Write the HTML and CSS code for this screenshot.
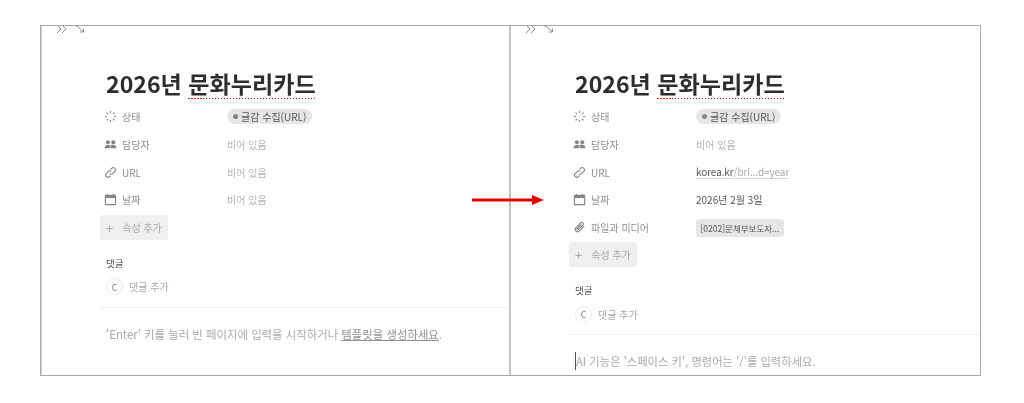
FILE: index.html
```html
<!DOCTYPE html>
<html lang="ko">
<head>
<meta charset="utf-8">
<title>문화누리카드</title>
<link rel="stylesheet" href="styles.css">
</head>
<body>
<svg class="defs" width="0" height="0" aria-hidden="true">
  <symbol id="i-side" viewBox="0 0 12 10"><path d="M1 1l4 4-4 4M6 1l4 4-4 4" fill="none" stroke="currentColor" stroke-width="1"/></symbol>
  <symbol id="i-exp" viewBox="0 0 12 10"><path d="M1 1h2.500M1 1v2M1 1l7 6.500M8.500 4.500V8H5" fill="none" stroke="currentColor" stroke-width="1"/></symbol>
  <symbol id="i-status" viewBox="0 0 14 14"><path d="M7 1v2.200M7 10.800V13M1 7h2.200M10.800 7H13M2.800 2.800l1.500 1.500M9.700 9.700l1.500 1.500M11.200 2.800 9.700 4.300M4.300 9.700l-1.500 1.500" fill="none" stroke="currentColor" stroke-width="1.200"/></symbol>
  <symbol id="i-people" viewBox="0 0 14 14"><circle cx="4.200" cy="4.600" r="2.200" fill="currentColor"/><circle cx="10" cy="4.600" r="2.200" fill="currentColor"/><path d="M.6 11c0-2.400 1.600-3.700 3.600-3.700S7 8.600 7 11zM7.600 11c0-1.600-.3-2.600-1-3.300.9-.4 2.100-.5 3.400-.4 2 .2 3.400 1.300 3.400 3.700z" fill="currentColor"/></symbol>
  <symbol id="i-link" viewBox="0 0 14 14"><path d="M6 8.200a2.300 2.300 0 0 0 3.300 0l2.300-2.300a2.400 2.400 0 0 0-3.400-3.400L7 3.700M8 5.800a2.300 2.300 0 0 0-3.300 0L2.400 8.100a2.400 2.400 0 0 0 3.400 3.400L7 10.300" fill="none" stroke="currentColor" stroke-width="1.200"/></symbol>
  <symbol id="i-cal" viewBox="0 0 14 14"><path d="M1.500 2.500h11v10h-11zM3.800 1v2M10.200 1v2" fill="none" stroke="currentColor" stroke-width="1.200"/><path d="M1.500 2.500h11v3h-11z" fill="currentColor"/></symbol>
  <symbol id="i-clip" viewBox="0 0 14 14"><path d="M12 5.500 6.800 10.800a2.500 2.500 0 0 1-3.600-3.600l5.200-5.300a1.700 1.700 0 0 1 2.400 2.400L5.700 9.400a.8.800 0 0 1-1.200-1.200L9 3.700" fill="none" stroke="currentColor" stroke-width="1.200"/></symbol>
</svg>

<main class="frame">
  <section class="panel panel-a">
    <div class="topbar">
      <svg class="tb"><use href="#i-side"/></svg>
      <svg class="tb"><use href="#i-exp"/></svg>
    </div>
    <div class="page">
      <h1 class="title">2026년 <span class="spell">문화누리카드</span></h1>
      <div class="props">
        <div class="row"><svg class="ic"><use href="#i-status"/></svg><span class="name">상태</span><span class="pill"><i class="dot"></i>글감 수집(URL)</span></div>
        <div class="row"><svg class="ic"><use href="#i-people"/></svg><span class="name">담당자</span><span class="empty">비어 있음</span></div>
        <div class="row"><svg class="ic"><use href="#i-link"/></svg><span class="name">URL</span><span class="empty">비어 있음</span></div>
        <div class="row"><svg class="ic"><use href="#i-cal"/></svg><span class="name">날짜</span><span class="empty">비어 있음</span></div>
      </div>
      <div class="add"><span class="plus">+</span><span>속성 추가</span></div>
      <div class="clabel">댓글</div>
      <div class="comment"><span class="avatar">C</span><span>댓글 추가</span></div>
      <div class="rule"></div>
      <p class="hint">'Enter' 키를 눌러 빈 페이지에 입력을 시작하거나 <u>템플릿을 생성하세요</u>.</p>
    </div>
  </section>

  <section class="panel panel-b">
    <div class="topbar">
      <svg class="tb"><use href="#i-side"/></svg>
      <svg class="tb"><use href="#i-exp"/></svg>
    </div>
    <div class="page">
      <h1 class="title">2026년 <span class="spell">문화누리카드</span></h1>
      <div class="props">
        <div class="row"><svg class="ic"><use href="#i-status"/></svg><span class="name">상태</span><span class="pill"><i class="dot"></i>글감 수집(URL)</span></div>
        <div class="row"><svg class="ic"><use href="#i-people"/></svg><span class="name">담당자</span><span class="empty">비어 있음</span></div>
        <div class="row"><svg class="ic"><use href="#i-link"/></svg><span class="name">URL</span><span class="url"><b>korea.kr</b>/bri...d=year</span></div>
        <div class="row"><svg class="ic"><use href="#i-cal"/></svg><span class="name">날짜</span><span class="val">2026년 2월 3일</span></div>
        <div class="row"><svg class="ic"><use href="#i-clip"/></svg><span class="name">파일과 미디어</span><span class="file">[0202]문체부보도자...</span></div>
      </div>
      <div class="add"><span class="plus">+</span><span>속성 추가</span></div>
      <div class="clabel">댓글</div>
      <div class="comment"><span class="avatar">C</span><span>댓글 추가</span></div>
      <div class="rule"></div>
      <p class="hint caret">AI 기능은 '스페이스 키', 명령어는 '/'를 입력하세요.</p>
    </div>
  </section>

  <svg class="arrow" width="74" height="12" viewBox="0 0 74 12" aria-hidden="true"><path d="M0 4.500h60V1l12 5-12 5V7.500H0z" fill="#e60000"/></svg>
</main>
</body>
</html>
```
FILE: styles.css
```css
* { box-sizing: border-box; }
html, body { margin: 0; height: 100%; background: #fff; }
body {
  padding: 25px 43px 0 40px;
  font-family: "Noto Sans CJK KR", "Noto Sans", sans-serif;
  color: #37373a;
  overflow: hidden;
}
.defs { position: absolute; }
.frame {
  position: relative;
  display: flex;
  width: 941px;
  height: 351px;
  border: 1px solid #a9a9a9;
  overflow: hidden;
}
.panel { min-width: 0; overflow: hidden; }
.panel-a { flex: 0 0 468px; border-left: 1px solid #d4d4d4; }
.panel-b { flex: 1 1 0; border-left: 2px solid #c4c4c4; }
.topbar {
  display: flex;
  gap: 7px;
  height: 10px;
  margin-top: -2px;
  padding-left: 14px;
  color: #8f8f8f;
}
.tb { width: 12px; height: 10px; }
.page { padding: 32px 0 0 64px; filter: blur(.3px); }
.title {
  margin: 0 0 3px;
  height: 34px;
  font-size: 23.100px;
  line-height: 34px;
  font-weight: 700;
  color: #2d2d2d;
  white-space: nowrap;
}
.spell {
  background-image: repeating-linear-gradient(90deg, #f01010 0 1.500px, transparent 1.500px 3px);
  background-repeat: no-repeat;
  background-size: 100% 1px;
  background-position: 0 calc(100% - 1px);
}
.props { display: flex; flex-direction: column; }
.row {
  display: flex;
  align-items: center;
  height: 27.700px;
  font-size: 10px;
  white-space: nowrap;
}
.ic { flex: none; width: 13px; height: 13px; margin: 0 5px 0 -2px; color: #858585; }
.name { flex: none; width: 105px; color: #8f8f8f; }
.empty { color: #b3b3b3; }
.val { color: #555; }
.url { color: #a8a8a8; border-bottom: 1px solid #dcdcdc; line-height: 12px; letter-spacing: -.1px; }
.url b { font-weight: 400; color: #555; }
.pill {
  display: inline-flex;
  align-items: center;
  height: 15px;
  padding: 0 6px;
  border-radius: 8px;
  background: #e6e6e4;
  color: #555;
}
.dot { width: 5px; height: 5px; margin-right: 3px; border-radius: 50%; background: #858585; }
.file {
  display: inline-flex;
  align-items: center;
  height: 18px;
  padding: 0 4.500px;
  border-radius: 3px;
  background: #e6e6e4;
  color: #555;
  font-size: 8.500px;
}
.add {
  display: inline-flex;
  align-items: center;
  gap: 9px;
  height: 25px;
  width: 68px;
  margin-left: -6px;
  padding-left: 6px;
  border-radius: 3px;
  background: #efefed;
  color: #a8a8a8;
  font-size: 10px;
  white-space: nowrap;
}
.plus { font-size: 13px; line-height: 1; }
.clabel { margin-top: 16px; height: 14px; font-size: 9.500px; line-height: 14px; color: #555; }
.comment {
  display: flex;
  align-items: center;
  gap: 6px;
  height: 18px;
  margin-top: 8px;
  font-size: 10px;
  color: #a8a8a8;
}
.avatar {
  display: flex;
  align-items: center;
  justify-content: center;
  width: 17px;
  height: 17px;
  border: 1px solid #e8e8e8;
  border-radius: 50%;
  color: #777;
  font-size: 8.500px;
}
.rule { height: 1px; margin: 11px 0 0 -6px; background: #efefef; }
.hint { margin: 17px 0 0; font-size: 11.400px; line-height: 18px; color: #a9a9a9; white-space: nowrap; }
.hint u { color: #8f8f8f; }
.caret { border-left: 1px solid #555; font-size: 11.300px; }
.arrow { position: absolute; left: 431px; top: 168px; }
```
